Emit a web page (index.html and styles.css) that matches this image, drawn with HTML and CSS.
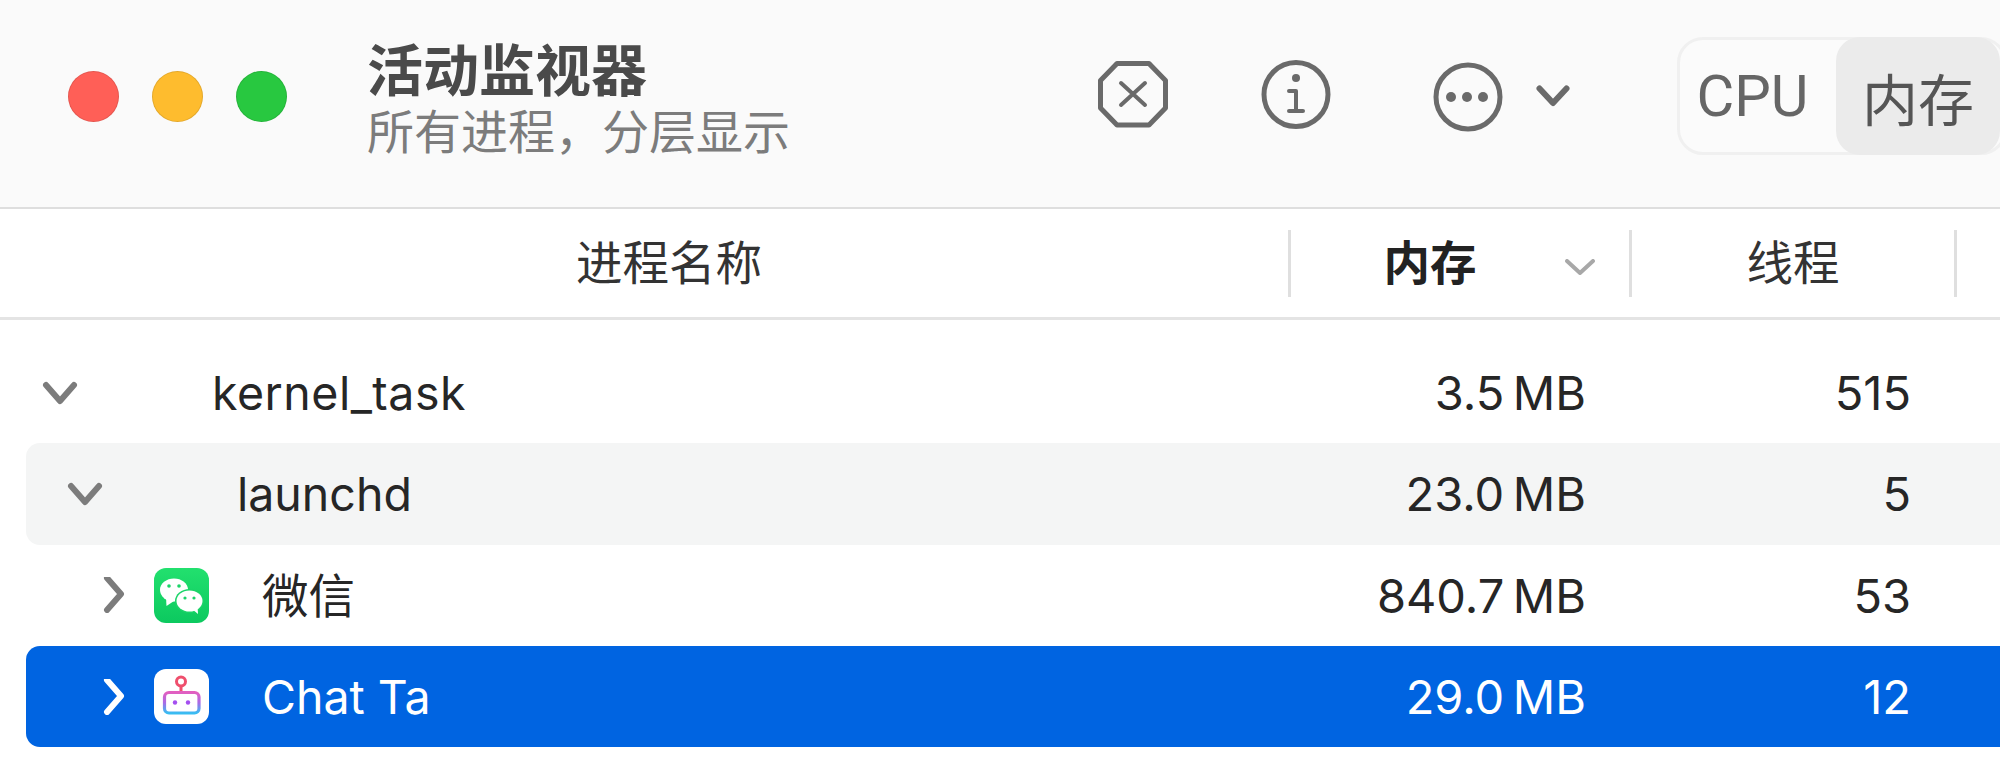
FILE: index.html
```html
<!DOCTYPE html>
<html lang="zh-CN">
<head>
    <meta charset="UTF-8">
    <title>活动监视器</title>
    <link rel="stylesheet" href="styles.css">
</head>
<body>
    <header class="toolbar">
        <div class="lights">
            <span class="light light-close"></span>
            <span class="light light-min"></span>
            <span class="light light-max"></span>
        </div>
        <div class="title-block">
            <h1>活动监视器</h1>
            <p>所有进程，分层显示</p>
        </div>
        <div class="tools">
            <svg class="tool" viewBox="0 0 80 80">
                <path d="M24 7.500H56L72.500 24.500V52L56 69H24L7.500 52V24.500Z"/>
                <path class="thin" d="M28 27L52 49M52 27L28 49"/>
            </svg>
            <svg class="tool tool-info" viewBox="0 0 80 80">
                <circle cx="40" cy="38.500" r="32"/>
                <circle class="fill" cx="40" cy="22" r="4"/>
                <path class="thin" d="M33 35H40V55M33 55H47"/>
            </svg>
            <svg class="tool tool-more" viewBox="0 0 80 80">
                <circle cx="40" cy="41" r="32"/>
                <circle class="fill" cx="23" cy="41" r="5"/>
                <circle class="fill" cx="39" cy="41" r="5"/>
                <circle class="fill" cx="55" cy="41" r="5"/>
            </svg>
            <svg class="tool tool-caret" viewBox="0 0 40 40">
                <path d="M6.500 12.500L20 27L33.500 12.500"/>
            </svg>
        </div>
        <div class="segmented">
            <span class="seg seg-cpu">CPU</span>
            <span class="seg seg-active">内存</span>
        </div>
    </header>

    <div class="columns">
        <div class="col col-name">进程名称</div>
        <div class="col col-mem">
            <b>内存</b>
            <svg class="sort" viewBox="0 0 30 16"><path d="M2 2L15 14L28 2"/></svg>
        </div>
        <div class="col col-threads">线程</div>
        <div class="col col-rest"></div>
    </div>

    <main class="list">
        <div class="row">
            <div class="name depth-0">
                <svg class="twisty" viewBox="0 0 36 36"><path d="M4 10L18 26L32 10"/></svg>
                <span class="icon-blank"></span>
                <span class="label-wide">kernel_task</span>
            </div>
            <div class="num">3.5&#8201;MB</div>
            <div class="num">515</div>
        </div>
        <div class="row row-hover">
            <div class="name depth-1">
                <svg class="twisty" viewBox="0 0 36 36"><path d="M4 10L18 26L32 10"/></svg>
                <span class="icon-blank"></span>
                <span>launchd</span>
            </div>
            <div class="num">23.0&#8201;MB</div>
            <div class="num">5</div>
        </div>
        <div class="row">
            <div class="name depth-2">
                <svg class="twisty" viewBox="0 0 36 36"><path d="M11 1L25 17L11 33"/></svg>
                <svg class="app-icon" viewBox="0 0 55 55">
                    <defs>
                        <linearGradient id="wechatBg" x1="0" y1="0" x2="0" y2="1">
                            <stop offset="0" stop-color="#22e06e"/>
                            <stop offset="1" stop-color="#0cc95f"/>
                        </linearGradient>
                    </defs>
                    <rect width="55" height="55" rx="12" fill="url(#wechatBg)"/>
                    <ellipse cx="20" cy="22" rx="14" ry="11.500" fill="#fff"/>
                    <path d="M12 29L12.500 38L20 33Z" fill="#fff"/>
                    <ellipse cx="35.500" cy="33" rx="14.500" ry="12" fill="#1bd468"/>
                    <ellipse cx="35.500" cy="33" rx="13" ry="10.500" fill="#fff"/>
                    <path d="M38 41L44 46L43.500 38Z" fill="#fff"/>
                    <circle cx="15" cy="18" r="1.800" fill="#1bd468"/>
                    <circle cx="25" cy="18" r="1.800" fill="#1bd468"/>
                    <circle cx="31" cy="30" r="1.600" fill="#1bd468"/>
                    <circle cx="40" cy="30" r="1.600" fill="#1bd468"/>
                </svg>
                <span class="label-cjk">微信</span>
            </div>
            <div class="num">840.7&#8201;MB</div>
            <div class="num">53</div>
        </div>
        <div class="row row-selected">
            <div class="name depth-2">
                <svg class="twisty" viewBox="0 0 36 36"><path d="M11 1L25 17L11 33"/></svg>
                <svg class="app-icon" viewBox="0 0 55 55">
                    <defs>
                        <linearGradient id="botBody" x1="0" y1="0" x2="0" y2="1">
                            <stop offset="0" stop-color="#e25fc0"/>
                            <stop offset="0.5" stop-color="#a86ae6"/>
                            <stop offset="1" stop-color="#38bdf2"/>
                        </linearGradient>
                    </defs>
                    <rect width="55" height="55" rx="12" fill="#fff"/>
                    <circle cx="27" cy="12.500" r="4.500" fill="none" stroke="#ef4f6d" stroke-width="3"/>
                    <path d="M27 17V23" stroke="#ef4f6d" stroke-width="3"/>
                    <rect x="10.500" y="23.500" width="34.500" height="20.500" rx="4.500" fill="none" stroke="url(#botBody)" stroke-width="3.200"/>
                    <circle cx="21" cy="33.500" r="2.200" fill="#a44ff0"/>
                    <circle cx="34" cy="33.500" r="2.200" fill="#a44ff0"/>
                </svg>
                <span>Chat Ta</span>
            </div>
            <div class="num">29.0&#8201;MB</div>
            <div class="num">12</div>
        </div>
    </main>
</body>
</html>
```
FILE: styles.css
```css
:root {
    --icon-color: #6a6a6a;
    --text-color: #262626;
    --line-color: #e4e4e4;
    --select-color: #0064e1;
}

* {
    margin: 0;
    padding: 0;
    box-sizing: border-box;
}

html, body {
    height: 759px;
    overflow: hidden;
}

body {
    font-family: Inter, "Noto Sans CJK SC", sans-serif;
    font-size: 46.5px;
    background: #fff;
    color: var(--text-color);
}

/* Title bar */
.toolbar {
    height: 209px;
    display: flex;
    align-items: center;
    padding: 0 0 15px 68px;
    background: #fafafa;
    border-bottom: 2px solid #dedede;
    overflow: hidden;
}

.lights {
    display: flex;
    gap: 33px;
}

.light {
    width: 51px;
    height: 51px;
    border-radius: 50%;
    border: 1px solid rgba(0, 0, 0, 0.1);
}

.light-close { background: #ff5f57; }
.light-min { background: #febc2e; }
.light-max { background: #28c840; }

.title-block {
    margin-left: 80px;
    padding-top: 5px;
}

.title-block h1 {
    font-size: 56px;
    line-height: 64px;
    font-weight: 700;
    color: #4a4a4a;
}

.title-block p {
    margin-top: 3px;
    font-size: 47px;
    line-height: 52px;
    color: #7c7c7c;
}

.tools {
    display: flex;
    align-items: center;
    margin-left: auto;
}

.tool {
    width: 80px;
    height: 80px;
    flex: none;
    fill: none;
    stroke: var(--icon-color);
    stroke-width: 5;
    stroke-linecap: round;
    stroke-linejoin: round;
}

.tool .fill {
    fill: var(--icon-color);
    stroke: none;
}

.tool .thin {
    stroke-width: 4;
}

.tool-info { margin-left: 83px; }
.tool-more { margin-left: 92px; }

.tool-caret {
    width: 40px;
    height: 40px;
    margin-left: 25px;
    stroke-width: 6;
}

.segmented {
    display: flex;
    flex: none;
    width: 330px;
    height: 118px;
    margin: 0 -7px 0 104px;
    border: 3px solid #f0f0f0;
    border-radius: 26px;
    background: #fbfbfb;
    color: #666;
}

.seg {
    display: flex;
    align-items: center;
    justify-content: center;
    margin: -3px 0;
}

.seg-cpu {
    width: 156px;
    padding-right: 11px;
    font-family: Roboto, sans-serif;
    font-size: 58px;
}

.seg-active {
    width: 164px;
    border-radius: 24px;
    background: #ebebeb;
    color: #555;
    font-size: 56px;
}

/* Column headers */
.columns {
    height: 111px;
    display: flex;
    align-items: center;
    border-bottom: 3px solid var(--line-color);
    color: #333;
}

.col {
    height: 67px;
    display: flex;
    align-items: center;
    justify-content: center;
    padding-bottom: 7px;
    border-right: 3px solid #dfdfdf;
}

.col-name {
    width: 1291px;
    padding-left: 50px;
}

.col-mem {
    width: 341px;
    position: relative;
    padding-right: 60px;
}

.col-mem b {
    color: #222;
}

.sort {
    position: absolute;
    right: 34px;
    top: 29px;
    width: 30px;
    height: 16px;
    fill: none;
    stroke: #a8a8a8;
    stroke-width: 4;
    stroke-linecap: round;
    stroke-linejoin: round;
}

.col-threads {
    width: 325px;
}

.col-rest {
    border-right: none;
}

/* Process rows */
.list {
    padding-top: 22px;
}

.row {
    height: 101.3px;
    margin-left: 26px;
    display: grid;
    grid-template-columns: 1fr 325px 325px 89px;
    align-items: center;
    border-radius: 14px 0 0 14px;
}

.row-hover {
    background: #f4f5f5;
}

.row-selected {
    background: var(--select-color);
    color: #fff;
}

.name {
    display: flex;
    align-items: center;
    white-space: nowrap;
}

.depth-0 { padding-left: 16px; }
.depth-1 { padding-left: 41px; }
.depth-2 { padding-left: 70px; }

.twisty {
    width: 36px;
    height: 36px;
    flex: none;
    fill: none;
    stroke: #7c7c7c;
    stroke-width: 6;
    stroke-linecap: round;
    stroke-linejoin: round;
}

.row-selected .twisty {
    stroke: #fff;
}

.icon-blank {
    width: 134px;
    flex: none;
}

.app-icon {
    width: 55px;
    height: 55px;
    flex: none;
    margin: 0 53px 0 22px;
}

.label-wide {
    letter-spacing: 0.5px;
}

.label-cjk {
    padding-bottom: 5px;
}

.num {
    font-size: 47px;
    text-align: right;
}

.name + .num {
    grid-column: 2;
}
```
